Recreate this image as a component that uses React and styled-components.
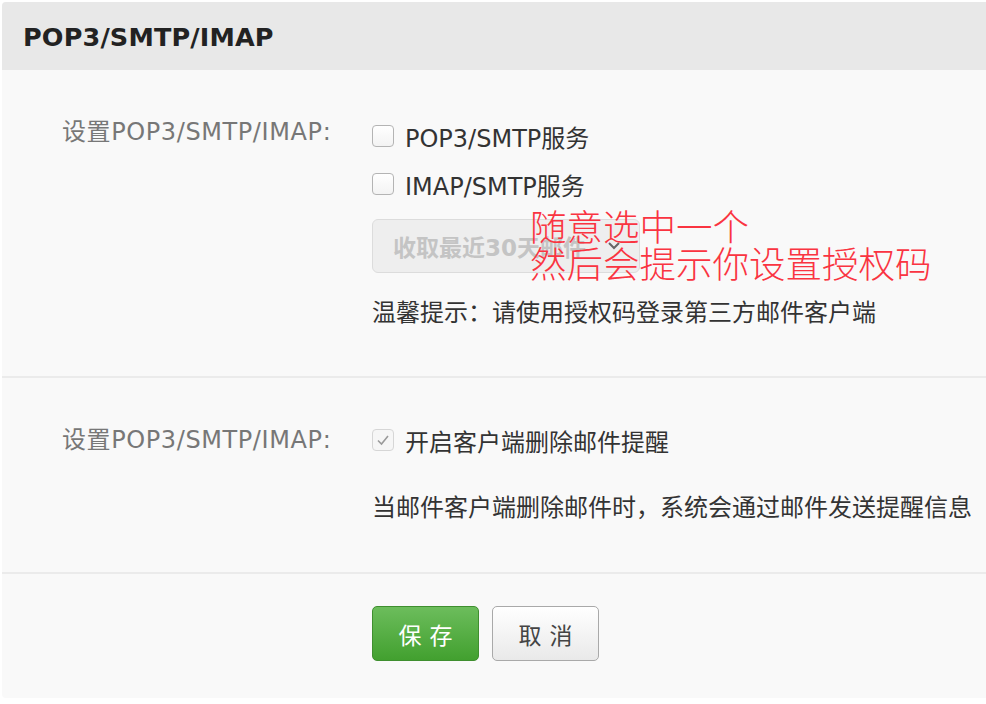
import React from 'react';
import styled, { createGlobalStyle } from 'styled-components';

const GlobalStyle = createGlobalStyle`
  html, body {
    margin: 0;
    padding: 0;
    background: #ffffff;
  }
  body {
    font-family: Verdana, "DejaVu Sans", "Noto Sans CJK SC", sans-serif;
  }
`;

const Page = styled.div`
  width: 986px;
  height: 704px;
  overflow: hidden;
  padding: 2px 0 0 2px;
  box-sizing: border-box;
`;

const Panel = styled.div`
  width: 1000px;
  height: 696px;
  background: #f9f9f9;
  border-radius: 4px;
  overflow: hidden;
  display: flex;
  flex-direction: column;
`;

const Header = styled.div`
  height: 68px;
  background: #e8e8e8;
  display: flex;
  align-items: center;
  padding-left: 21px;
  font-size: 25.5px;
  font-weight: bold;
  letter-spacing: 0.15px;
  color: #222;
  padding-top: 2px;
  box-sizing: border-box;
`;

const Section = styled.div`
  position: relative;
  display: grid;
  grid-template-columns: 370px 1fr;
  padding: ${p => p.$pad};
  border-bottom: ${p => (p.$last ? 'none' : '2px solid #ebebeb')};
`;

const Label = styled.div`
  padding-left: 60px;
  font-size: 24px;
  letter-spacing: 0.6px;
  line-height: 40px;
  color: #777;
  margin-top: ${p => p.$offset || 0}px;
`;

const Controls = styled.div`
  display: flex;
  flex-direction: column;
  align-items: flex-start;
`;

const Option = styled.label`
  display: flex;
  align-items: center;
  gap: 11px;
  height: 48px;
  font-size: 24px;
  color: #333;
`;

const Box = styled.span`
  width: 20px;
  height: 20px;
  border: 1px solid ${p => (p.$checked ? '#d6d6d6' : '#b4b4b4')};
  border-radius: 4px;
  background: ${p => (p.$checked ? '#f6f6f6' : 'linear-gradient(#ffffff, #f3f3f3)')};
  display: flex;
  align-items: center;
  justify-content: center;
  flex-shrink: 0;
`;

const Select = styled.div`
  margin-top: 11px;
  box-sizing: border-box;
  width: 268px;
  height: 54px;
  border: 1px solid #dcdcdc;
  border-radius: 6px;
  background: #eeeeee;
  display: flex;
  align-items: center;
  justify-content: space-between;
  padding: 0 18px 0 20px;
  font-size: 23px;
  font-weight: bold;
  color: #c4c4c4;
`;

const Hint = styled.div`
  margin-top: ${p => p.$mt}px;
  font-size: 24px;
  line-height: 48px;
  color: #333;
  white-space: nowrap;
`;

const Note = styled.div`
  position: absolute;
  left: 528px;
  top: 137px;
  font-family: "Noto Sans CJK SC", sans-serif;
  font-weight: 300;
  font-size: 36.5px;
  line-height: 37px;
  color: #fa3441;
`;

const Footer = styled.div`
  display: flex;
  gap: 13px;
  padding: 32px 0 0 370px;
`;

const Button = styled.button`
  width: 107px;
  height: 55px;
  border-radius: 5px;
  font-family: "Noto Sans CJK SC", sans-serif;
  font-size: 23px;
  letter-spacing: 8px;
  text-indent: 8px;
  cursor: pointer;
  border: 1px solid ${p => (p.$primary ? '#3f8f2f' : '#a9a9a9')};
  color: ${p => (p.$primary ? '#ffffff' : '#444')};
  background: ${p =>
    p.$primary
      ? 'linear-gradient(#6cbd5c, #42a02f)'
      : 'linear-gradient(#ffffff, #e9e9e9)'};
`;

const Check = () => (
  <svg width="14" height="14" viewBox="0 0 14 14">
    <path d="M2 7.5 L5.5 11 L12 3" fill="none" stroke="#9a9a9a" strokeWidth="1.6" />
  </svg>
);

const Chevron = () => (
  <svg width="14" height="10" viewBox="0 0 14 10">
    <path d="M2 2 L7 7 L12 2" fill="none" stroke="#666" strokeWidth="2" />
  </svg>
);

export default function App() {
  return (
    <Page>
      <GlobalStyle />
      <Panel>
        <Header>POP3/SMTP/IMAP</Header>

        <Section $pad="42px 0 39px">
          <Label $offset={0}>设置POP3/SMTP/IMAP:</Label>
          <Controls>
            <Option>
              <Box />
              POP3/SMTP服务
            </Option>
            <Option>
              <Box />
              IMAP/SMTP服务
            </Option>
            <Select>
              <span>收取最近30天邮件</span>
              <Chevron />
            </Select>
            <Hint $mt={16}>温馨提示：请使用授权码登录第三方邮件客户端</Hint>
          </Controls>
          <Note>
            随意选中一个
            <br />
            然后会提示你设置授权码
          </Note>
        </Section>

        <Section $pad="38px 0 40px">
          <Label $offset={4}>设置POP3/SMTP/IMAP:</Label>
          <Controls>
            <Option>
              <Box $checked>
                <Check />
              </Box>
              开启客户端删除邮件提醒
            </Option>
            <Hint $mt={20}>当邮件客户端删除邮件时，系统会通过邮件发送提醒信息</Hint>
          </Controls>
        </Section>

        <Footer>
          <Button $primary>保存</Button>
          <Button>取消</Button>
        </Footer>
      </Panel>
    </Page>
  );
}
